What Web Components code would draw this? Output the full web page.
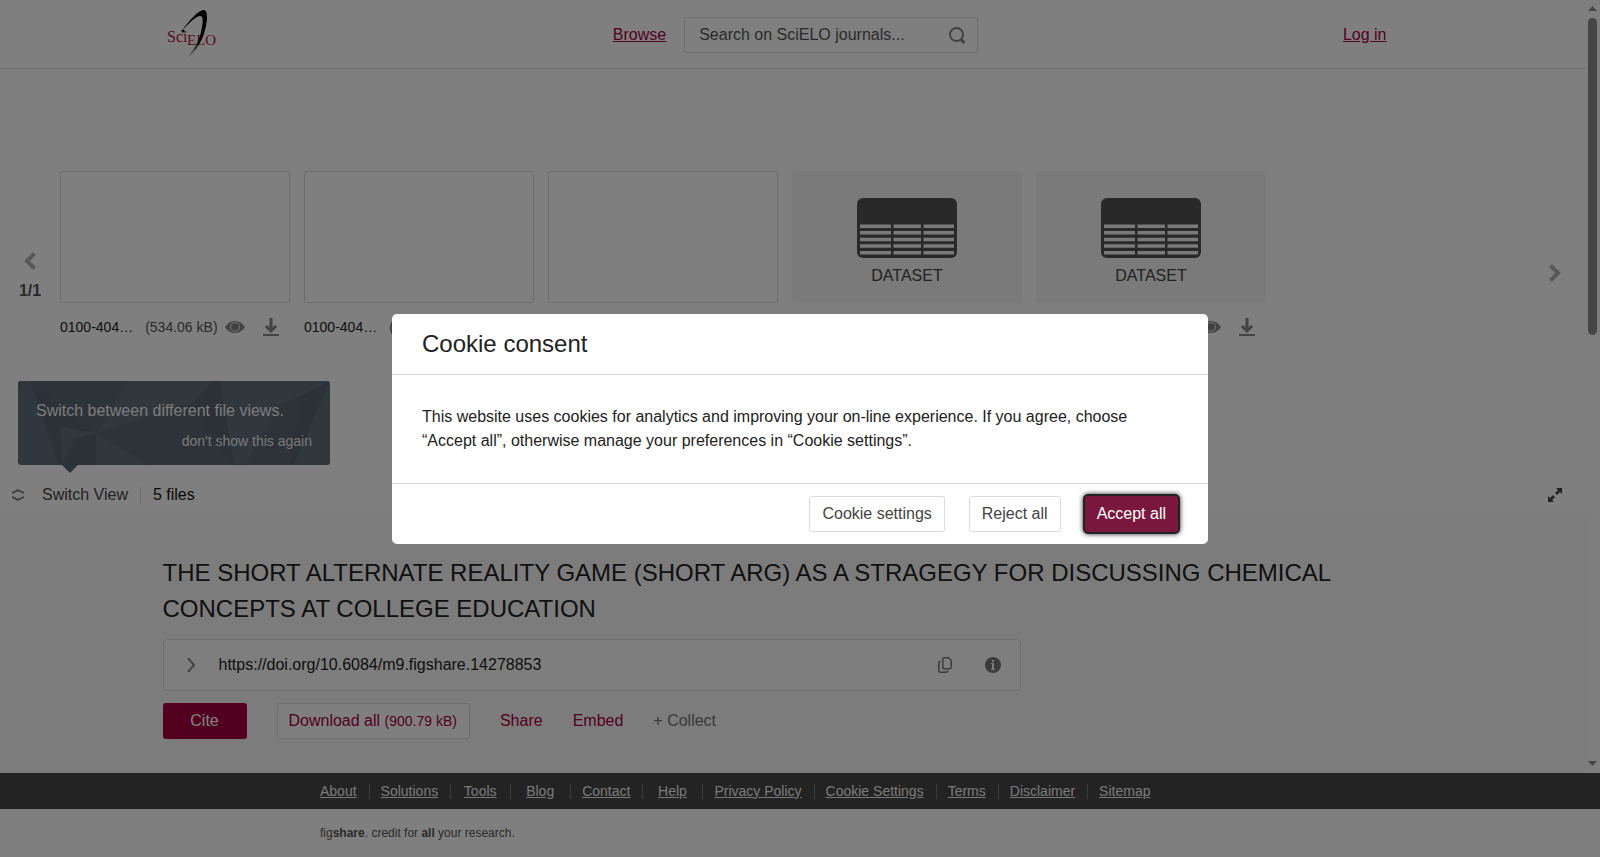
<!DOCTYPE html>
<html lang="en">
<head>
<meta charset="utf-8">
<meta name="viewport" content="width=device-width, initial-scale=1">
<title>SciELO journals</title>
<style>
    html, body{
        height: 100%;
        margin: 0;
    }
    body{
        font-family: "Liberation Sans", Arial, sans-serif;
        font-size: 16px;
        line-height: 24px;
        color: #222;
        background: #fff;
        overflow: hidden;
        --brand: #a6003f;
        --line: #dadada;
    }
</style>
</head>
<body>
<app-shell>
    <site-header slot="content"></site-header>
    <file-viewer slot="content">
        <file-card size="534.06 kB">0100-404…</file-card>
        <file-card size="183.41 kB">0100-404…</file-card>
        <file-card size="102.28 kB">0100-404…</file-card>
        <file-card size="40.52 kB" kind="DATASET">0100-404…</file-card>
        <file-card size="40.52 kB" kind="DATASET">0100-404…</file-card>
    </file-viewer>
    <item-details slot="content" doi="https://doi.org/10.6084/m9.figshare.14278853" size="900.79 kB">THE SHORT ALTERNATE REALITY GAME (SHORT ARG) AS A STRAGEGY FOR DISCUSSING CHEMICAL CONCEPTS AT COLLEGE EDUCATION</item-details>
    <site-footer slot="footer">fig<b>share</b>. credit for <b>all</b> your research.</site-footer>
</app-shell>
<cookie-dialog>
    <span slot="title">Cookie consent</span>
    This website uses cookies for analytics and improving your on-line experience. If you agree, choose “Accept all”, otherwise manage your preferences in “Cookie settings”.
</cookie-dialog>

<script>
class AppShell extends HTMLElement{
    constructor(){
        super()
        this.attachShadow({mode: "open"}).innerHTML = `
        <style>
        :host{
            display: flex;
            flex-direction: column;
            height: 100vh;
        }
        .scroller{
            flex: 1;
            min-height: 0;
            display: flex;
        }
        main{
            flex: 1;
            min-width: 0;
            display: flex;
            flex-direction: column;
            overflow: hidden;
            background: #f8f8f8;
        }
        </style>
        <div class="scroller">
            <main><slot name="content"></slot></main>
            <scroll-track></scroll-track>
        </div>
        <slot name="footer"></slot>
        `
    }
}

class ScrollTrack extends HTMLElement{
    constructor(){
        super()
        this.attachShadow({mode: "open"}).innerHTML = `
        <style>
        :host{
            display: flex;
            flex-direction: column;
            align-items: center;
            width: 15px;
            background: #fcfcfc;
        }
        svg{
            display: block;
            fill: #8b8b8b;
        }
        .track{
            flex: 1;
            width: 9px;
        }
        .thumb{
            height: 43%;
            border-radius: 5px;
            background: #8b8b8b;
        }
        </style>
        <svg width="9" height="18"><path d="M0 11L4.500 6L9 11z"/></svg>
        <div class="track"><div class="thumb"></div></div>
        <svg width="9" height="18"><path d="M0 6h9L4.500 11z"/></svg>
        `
    }
}

class SiteHeader extends HTMLElement{
    constructor(){
        super()
        this.attachShadow({mode: "open"}).innerHTML = `
        <style>
        :host{
            display: block;
            flex: none;
            background: #fff;
            border-bottom: 1px solid var(--line);
        }
        .bar{
            display: grid;
            grid-template-columns: 1fr auto 1fr;
            align-items: center;
            box-sizing: border-box;
            max-width: 1260px;
            height: 68px;
            margin: 0 auto;
            padding-top: 2px;
        }
        .logo{
            justify-self: start;
            padding-left: 4px;
        }
        .logo svg{
            display: block;
        }
        a{
            color: var(--brand);
        }
        nav{
            display: flex;
            align-items: center;
            gap: 18px;
            padding-left: 6px;
        }
        .search{
            display: flex;
            align-items: center;
            box-sizing: border-box;
            width: 294px;
            height: 36px;
            padding: 0 11px 0 14px;
            border: 1px solid var(--line);
            border-radius: 3px;
        }
        input{
            flex: 1;
            min-width: 0;
            padding: 0;
            border: 0;
            outline: 0;
            background: none;
            font: inherit;
        }
        input::placeholder{
            color: #555;
            opacity: 1;
        }
        button{
            display: flex;
            padding: 0;
            border: 0;
            background: none;
        }
        .login{
            justify-self: end;
            padding-right: 36px;
        }
        </style>
        <div class="bar">
            <a class="logo" href="#" aria-label="SciELO">
                <svg width="50" height="50" viewBox="0 0 50 50">
                    <defs>
                        <linearGradient id="fade" x1="0" y1="0" x2="0" y2="1">
                            <stop offset=".6" stop-color="#000"/>
                            <stop offset="1" stop-color="#000" stop-opacity="0"/>
                        </linearGradient>
                    </defs>
                    <g fill="#b5123e" font-family="Liberation Serif, serif">
                        <text x="0" y="32" font-size="16">Sci</text>
                        <text x="20" y="35" font-size="15">ELO</text>
                    </g>
                    <path fill="url(#fade)" d="M15 21C21 12 31 0 37 0C42 1 40 14 37 24C33 35 26 45 19 49C25 42 32 32 34 22C36 13 37 6 33 6C29 6 22 13 15 21z"/>
                    <circle cx="16" cy="21" r="1.500"/>
                </svg>
            </a>
            <nav>
                <a href="#">Browse</a>
                <div class="search">
                    <input type="text" aria-label="Search on SciELO journals" placeholder="Search on SciELO journals...">
                    <button aria-label="Search">
                        <svg width="17" height="17" viewBox="0 0 17 17" fill="none" stroke="#858585" stroke-width="2"><circle cx="7.500" cy="7.500" r="6.500"/><path d="M11.500 12L15.500 16" stroke-width="3"/></svg>
                    </button>
                </div>
            </nav>
            <span class="login"><a href="#">Log in</a></span>
        </div>
        `
    }
}

class FileViewer extends HTMLElement{
    constructor(){
        super()
        this.attachShadow({mode: "open"}).innerHTML = `
        <style>
        :host{
            display: block;
            flex: none;
            padding-top: 102px;
            background: #fff;
        }
        .gallery{
            display: grid;
            grid-template-columns: 60px 1fr 60px;
            height: 204px;
            margin-bottom: 102px;
        }
        .cards{
            display: flex;
            gap: 14px;
        }
        .pager{
            display: flex;
            flex-direction: column;
            align-items: center;
            justify-content: center;
            gap: 9px;
        }
        .prev{
            padding-top: 9px;
            font-weight: bold;
            color: #555;
        }
        button{
            display: flex;
            align-items: center;
            padding: 0;
            border: 0;
            background: none;
            font: inherit;
            color: #444;
        }
        .tools{
            position: relative;
            display: flex;
            align-items: center;
            height: 36px;
            padding: 0 23px 0 12px;
        }
        .switch{
            gap: 18px;
        }
        .count{
            margin-left: 12px;
            padding-left: 12px;
            border-left: 1px solid var(--line);
            line-height: 18px;
            color: #111;
        }
        .full{
            margin-left: auto;
        }
        view-tip{
            position: absolute;
            left: 18px;
            bottom: 48px;
        }
        </style>
        <div class="gallery">
            <div class="pager prev">
                <button aria-label="Previous"><svg width="12" height="18" viewBox="0 0 12 18" fill="none" stroke="#b0b0b0" stroke-width="4"><path d="M10.500 1.500L3 9l7.500 7.500"/></svg></button>
                <span>1/1</span>
            </div>
            <div class="cards"><slot></slot></div>
            <div class="pager">
                <button aria-label="Next"><svg width="12" height="18" viewBox="0 0 12 18" fill="none" stroke="#b0b0b0" stroke-width="4"><path d="M1.500 1.500L9 9l-7.500 7.500"/></svg></button>
            </div>
        </div>
        <div class="tools">
            <view-tip></view-tip>
            <button class="switch"><svg width="12" height="14" viewBox="0 0 12 14" fill="none" stroke="#858585" stroke-width="2"><path d="M0 5l6-3l6 3M0 9l6 3l6-3"/></svg>Switch View</button>
            <span class="count">5 files</span>
            <button class="full" aria-label="Full screen"><svg width="14" height="14" viewBox="0 0 14 14" fill="#444"><path d="M8 0h6v6l-2-2l-3 3l-2-2l3-3zM0 8l2 2l3-3l2 2l-3 3l2 2H0z"/></svg></button>
        </div>
        `
    }
}

class ViewTip extends HTMLElement{
    constructor(){
        super()
        this.attachShadow({mode: "open"}).innerHTML = `
        <style>
        :host{
            display: block;
            width: 312px;
        }
        .box{
            position: relative;
            box-sizing: border-box;
            padding: 18px 18px 12px;
            border-radius: 3px;
            background: #606e7a;
            color: #fff;
        }
        .facets{
            position: absolute;
            inset: 0;
            width: 100%;
            height: 100%;
            border-radius: 3px;
        }
        .arrow{
            position: absolute;
            left: 44px;
            top: 100%;
            display: block;
        }
        p{
            position: relative;
            margin: 0 0 6px;
            opacity: .95;
        }
        button{
            position: relative;
            display: block;
            margin-left: auto;
            padding: 0;
            border: 0;
            background: none;
            font: inherit;
            font-size: 14px;
            color: #f0f0f0;
        }
        </style>
        <div class="box">
            <svg class="facets" viewBox="0 0 312 84" preserveAspectRatio="none">
                <path fill="#5a6873" d="M0 0L5 0L0 8zM12 0L110 0L83 46L78 52z"/>
                <path fill="#56626e" d="M12 0L78 52L42 46L44 84L41 84zM57 58L78 52V84H44z"/>
                <path fill="#5a6772" d="M78 52L175 21L188 50L216 84H120z"/>
                <path fill="#616f7b" d="M42 46L78 52L57 58L45 82zM80 54L130 84H90z"/>
                <path fill="#56626e" d="M175 21L195 0H202L216 84L188 50zM262 23L283 15L312 0L276 84H228z"/>
                <path fill="#5a6772" d="M262 23L283 15L272 84H228z"/>
            </svg>
            <p>Switch between different file views.</p>
            <button>don't show this again</button>
            <svg class="arrow" width="16" height="8"><path fill="#586672" d="M0 0H16L9 7Q8 8 7 7z"/></svg>
        </div>
        `
    }
}

class FileCard extends HTMLElement{
    constructor(){
        super()
        const kind = this.getAttribute("kind")
        this.attachShadow({mode: "open"}).innerHTML = `
        <style>
        :host{
            display: block;
            flex: none;
            width: 230px;
            font-size: 14px;
            line-height: 20px;
        }
        .thumb{
            display: flex;
            flex-direction: column;
            align-items: center;
            box-sizing: border-box;
            height: 132px;
            padding-top: 26px;
            border: 1px solid var(--line);
            border-radius: 3px;
            font-size: 16px;
            color: #444;
        }
        .filled{
            border-color: #f4f4f4;
            background: #f4f4f4;
        }
        .thumb span{
            padding-top: 8px;
        }
        .caption{
            display: flex;
            align-items: center;
            margin-top: 14px;
            padding-right: 11px;
        }
        .size{
            margin-left: 12px;
            color: #555;
        }
        .actions{
            display: flex;
            align-items: center;
            gap: 18px;
            margin-left: auto;
        }
        button{
            display: flex;
            padding: 0;
            border: 0;
            background: none;
        }
        </style>
        <div class="thumb ${kind ? "filled" : ""}">${kind ? this.dataset_(kind) : ""}</div>
        <div class="caption">
            <slot></slot>
            <span class="size">(${this.getAttribute("size")})</span>
            <div class="actions">
                <button aria-label="Preview"><svg width="20" height="12" viewBox="0 0 20 12"><path fill="#858585" d="M0 6C5-2 15-2 20 6C15 14 5 14 0 6z"/><circle cx="10" cy="6" r="4.500" fill="#858585" stroke="#f4f4f4"/></svg></button>
                <button aria-label="Download"><svg width="16" height="18" viewBox="0 0 16 18" fill="none" stroke="#858585"><path stroke-width="2" d="M0 17h16"/><path stroke-width="3" d="M8 0v12M3 8l5 5l5-5"/></svg></button>
            </div>
        </div>
        `
    }

    // spreadsheet icon, cells are cut out with the card colour
    dataset_(label){
        let cells = ""
        for(let row = 0; row < 5; row++){
            const y = 26.5 + row * 6.6
            cells += `<path d="M3 ${y}h31v3.500h-31zM36.500 ${y}h27.500v3.500h-27.500zM66.500 ${y}h30.500v3.500h-30.500z"/>`
        }
        return `<svg width="100" height="60" viewBox="0 0 100 60"><rect width="100" height="60" rx="6" fill="#525252"/><g fill="#f4f4f4">${cells}</g></svg><span>${label}</span>`
    }
}

class ItemDetails extends HTMLElement{
    constructor(){
        super()
        this.attachShadow({mode: "open"}).innerHTML = `
        <style>
        :host{
            display: block;
            box-sizing: border-box;
            width: 100%;
            max-width: 1260px;
            margin: 0 auto;
            padding-top: 42px;
        }
        h1{
            margin: 0 0 12px;
            font-size: 24px;
            font-weight: normal;
            line-height: 36px;
        }
        .doi{
            display: flex;
            align-items: center;
            box-sizing: border-box;
            max-width: 858px;
            height: 52px;
            padding: 0 19px 0 23px;
            border: 1px solid var(--line);
            border-radius: 5px;
            background: #fdfdfd;
        }
        .doi span{
            flex: 1;
            padding-left: 23px;
        }
        .doi button{
            display: flex;
            padding: 0;
            border: 0;
            background: none;
        }
        .info{
            margin-left: 33px;
        }
        .actions{
            display: flex;
            align-items: center;
            gap: 30px;
            margin-top: 12px;
        }
        .actions button{
            height: 36px;
            padding: 0;
            border: 0;
            border-radius: 3px;
            background: none;
            font: inherit;
            color: var(--brand);
        }
        .actions .cite{
            width: 84px;
            background: var(--brand);
            color: #fff;
        }
        .actions .download{
            padding: 0 12px 0 11px;
            border: 1px solid var(--line);
            background: #fff;
        }
        .actions .collect{
            color: #777;
        }
        small{
            font-size: 14px;
        }
        </style>
        <h1><slot></slot></h1>
        <div class="doi">
            <button aria-label="Expand"><svg width="9" height="14" viewBox="0 0 9 14" fill="none" stroke="#858585" stroke-width="2"><path d="M1 0l6 7l-6 7"/></svg></button>
            <span>${this.getAttribute("doi")}</span>
            <button aria-label="Copy"><svg width="14" height="16" viewBox="0 0 14 16" fill="none" stroke="#777" stroke-width="1.500"><path d="M6 .8H10.500L13.200 3.500V10Q13.200 11.700 11.700 11.700H6.300Q4.800 11.700 4.800 10.200V2.300Q4.800.8 6 .8z"/><path d="M2.600 4.600H2Q.8 4.600.8 6V13.800Q.8 15.200 2.200 15.200H8.300Q9.800 15.200 9.800 13.500"/></svg></button>
            <button class="info" aria-label="Information"><svg width="16" height="16" viewBox="0 0 16 16"><circle cx="8" cy="8" r="8" fill="#777"/><path fill="#fdfdfd" d="M7 3h2v2H7zM6 6h3v6h1v1H6v-1h1V7H6z"/></svg></button>
        </div>
        <div class="actions">
            <button class="cite">Cite</button>
            <button class="download">Download all <small>(${this.getAttribute("size")})</small></button>
            <button>Share</button>
            <button>Embed</button>
            <button class="collect">+ Collect</button>
        </div>
        `
    }
}

class SiteFooter extends HTMLElement{
    constructor(){
        super()
        const links = ["About", "Solutions", "Tools", "Blog", "Contact", "Help", "Privacy Policy", "Cookie Settings", "Terms", "Disclaimer", "Sitemap"]
        this.attachShadow({mode: "open"}).innerHTML = `
        <style>
        :host{
            display: block;
            background: #fff;
        }
        nav{
            background: #464646;
        }
        ul{
            display: flex;
            align-items: center;
            max-width: 982px;
            height: 36px;
            margin: 0 auto;
            padding: 0;
            list-style: none;
            font-size: 14px;
            line-height: 15px;
        }
        li{
            box-sizing: border-box;
            min-width: 60px;
            padding: 0 12px 0 11px;
            border-right: 1px solid #777;
            text-align: center;
            white-space: nowrap;
        }
        li:last-child{
            border: 0;
        }
        a{
            color: #f0f0f0;
        }
        p{
            max-width: 960px;
            margin: 0 auto;
            font-size: 12px;
            line-height: 48px;
            color: #555;
        }
        </style>
        <nav><ul>${links.map(name => `<li><a href="#">${name}</a></li>`).join("")}</ul></nav>
        <p><slot></slot></p>
        `
    }
}

class CookieDialog extends HTMLElement{
    constructor(){
        super()
        this.attachShadow({mode: "open"}).innerHTML = `
        <style>
        :host{
            position: fixed;
            inset: 0;
            display: flex;
            align-items: center;
            justify-content: center;
            background: rgba(0, 0, 0, .5);
        }
        section{
            width: 816px;
            max-width: 100%;
            border-radius: 5px;
            background: #fff;
        }
        h2{
            margin: 0;
            padding: 0 30px;
            border-bottom: 1px solid var(--line);
            font-size: 24px;
            font-weight: normal;
            line-height: 60px;
        }
        p{
            margin: 0;
            padding: 30px;
        }
        footer{
            display: flex;
            justify-content: flex-end;
            gap: 24px;
            padding: 12px 30px;
            border-top: 1px solid var(--line);
        }
        button{
            height: 36px;
            padding: 0 12px;
            border: 1px solid var(--line);
            border-radius: 3px;
            background: #fff;
            font: inherit;
            color: #444;
        }
        .accept{
            border: 0;
            background: #7a173c;
            color: #fff;
            outline: 2px solid #222;
            box-shadow: 0 0 5px 2px #222;
        }
        </style>
        <section role="dialog" aria-modal="true" aria-labelledby="title">
            <h2 id="title"><slot name="title"></slot></h2>
            <p><slot></slot></p>
            <footer>
                <button>Cookie settings</button>
                <button>Reject all</button>
                <button class="accept">Accept all</button>
            </footer>
        </section>
        `
    }
}

customElements.define("app-shell", AppShell)
customElements.define("scroll-track", ScrollTrack)
customElements.define("site-header", SiteHeader)
customElements.define("view-tip", ViewTip)
customElements.define("file-card", FileCard)
customElements.define("file-viewer", FileViewer)
customElements.define("item-details", ItemDetails)
customElements.define("site-footer", SiteFooter)
customElements.define("cookie-dialog", CookieDialog)
</script>
</body>
</html>
